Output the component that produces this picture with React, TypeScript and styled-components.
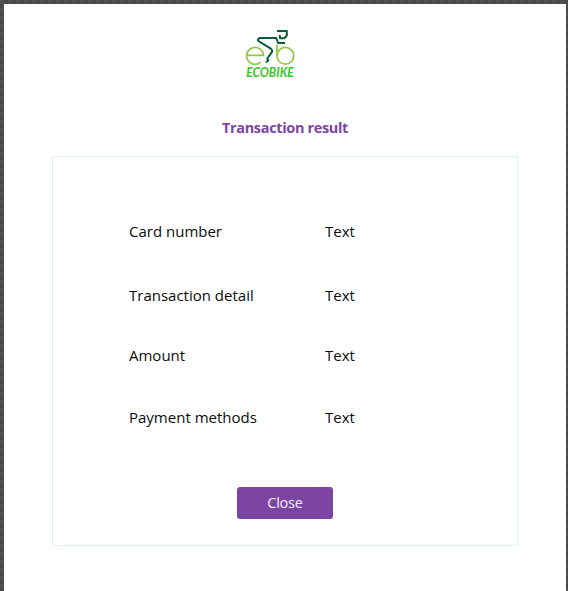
import React from "react";
import styled, { createGlobalStyle } from "styled-components";

const GlobalStyle = createGlobalStyle`
  *, *::before, *::after { box-sizing: border-box; }
  body { margin: 0; background: #4a4a4a; font-family: "Open Sans", "Noto Sans", sans-serif; }
`;

const Backdrop = styled.div`
  height: 591px;
  padding: 4px 2px 0 4px;
  background: repeating-conic-gradient(#494949 0% 25%, #515151 0% 50%) 0 0 / 8px 8px;
`;

const Page = styled.main`
  height: 100%;
  padding: 23px 48px 0;
  background: #fff;
  display: flex;
  flex-direction: column;
  align-items: center;
`;

const Logo = styled.svg`
  display: block;
  width: 52px;
  height: 52px;
  margin-right: 30px;
`;

const Title = styled.h1`
  margin: 38px 0 0;
  height: 22px;
  font-size: 14.5px;
  line-height: 22px;
  font-weight: 700;
  letter-spacing: -0.35px;
  color: #7c45a4;
  white-space: nowrap;
`;

const Panel = styled.section`
  width: 466px;
  height: 390px;
  margin-top: 17px;
  padding: 62px 0 0;
  border: 1px solid #dff1f1;
  display: flex;
  flex-direction: column;
  align-items: center;
`;

const Details = styled.dl`
  align-self: stretch;
  margin: 0 0 0 76px;
  display: grid;
  grid-template-columns: 196px 1fr;
  grid-template-rows: 64px 60px 62px 24px;
  font-size: 15px;
  line-height: 24px;
  color: #0c0c0c;
`;

const Label = styled.dt`
  white-space: nowrap;
`;

const Value = styled.dd`
  margin: 0;
`;

const CloseButton = styled.button`
  width: 96px;
  height: 32px;
  margin-top: 58px;
  padding: 0;
  border: 0;
  border-radius: 3px;
  background: #7c45a4;
  color: #f6effb;
  font: 400 14.5px/30px "Open Sans", sans-serif;
  letter-spacing: -0.2px;
`;

const rows = [
  { label: "Card number", value: "Text" },
  { label: "Transaction detail", value: "Text" },
  { label: "Amount", value: "Text" },
  { label: "Payment methods", value: "Text" },
];

function EcoBikeLogo() {
  return (
    <Logo viewBox="244 27 52 52" role="img" aria-label="EcoBike">
      <g fill="none" stroke="#91c63e" strokeWidth="1.7">
        <path d="M247 55.4H263.6A8.5 8.5 0 1 0 261 62" />
        <circle cx="285.4" cy="55.8" r="8.4" />
        <path d="M277 44.5V56" />
      </g>
      <g fill="none" stroke="#075b35" strokeWidth="2" strokeLinejoin="round">
        <path d="M285 43H278.2L276.2 38H260Q257 38.8 258.3 41L270.8 48.7Q273.2 50.4 271.5 52.7L267.3 58.5L268.3 60.5L265.8 62.3" />
        <path d="M277 31H286.8V35.5L284.5 38.2H280L279.7 35" />
      </g>
      <text
        x="246.3"
        y="76.8"
        textLength="47.5"
        lengthAdjust="spacingAndGlyphs"
        fill="#35c72c"
        fontFamily="Lato, sans-serif"
        fontWeight="700"
        fontStyle="italic"
        fontSize="12.6"
      >
        ECOBIKE
      </text>
    </Logo>
  );
}

export default function App() {
  return (
    <>
      <GlobalStyle />
      <Backdrop>
        <Page>
          <EcoBikeLogo />
          <Title>Transaction result</Title>
          <Panel>
            <Details>
              {rows.map((row) => (
                <React.Fragment key={row.label}>
                  <Label>{row.label}</Label>
                  <Value>{row.value}</Value>
                </React.Fragment>
              ))}
            </Details>
            <CloseButton type="button">Close</CloseButton>
          </Panel>
        </Page>
      </Backdrop>
    </>
  );
}
